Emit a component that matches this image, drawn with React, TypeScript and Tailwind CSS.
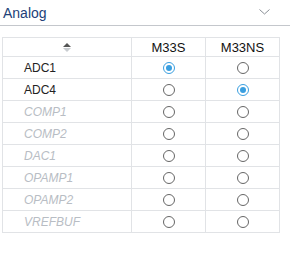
import React from "react";

const rows = [
  { name: "ADC1", enabled: true, sel: 0 },
  { name: "ADC4", enabled: true, sel: 1 },
  { name: "COMP1", enabled: false, sel: -1 },
  { name: "COMP2", enabled: false, sel: -1 },
  { name: "DAC1", enabled: false, sel: -1 },
  { name: "OPAMP1", enabled: false, sel: -1 },
  { name: "OPAMP2", enabled: false, sel: -1 },
  { name: "VREFBUF", enabled: false, sel: -1 },
];

function Radio({ on }: { on: boolean }) {
  if (on) {
    return (
      <span className="flex h-[12px] w-[12px] items-center justify-center rounded-full border border-[#3a9fe0] bg-white">
        <span className="h-[6px] w-[6px] rounded-full bg-[#3a9fe0]" />
      </span>
    );
  }
  return <span className="block h-[12px] w-[12px] rounded-full border border-[#666] bg-white" />;
}

export default function App() {
  return (
    <div className="h-[266px] w-[294px] bg-white font-[Liberation_Sans,Arial,sans-serif]">
      <div className="flex h-[26px] w-[290px] items-center justify-between border-b border-[#c4c7cc] pl-[3px] pr-[20px]">
        <span className="text-[14px] leading-none text-[#223f78]">Analog</span>
        <svg width="11" height="6" viewBox="0 0 11 6" className="mb-[2px]">
          <path d="M0.5 0.5 L5.5 5 L10.5 0.5" fill="none" stroke="#8a8f96" strokeWidth="1" />
        </svg>
      </div>
      <table className="ml-[2px] mt-[11px] w-[277px] table-fixed border-collapse text-[12px]">
        <colgroup>
          <col className="w-[129px]" />
          <col className="w-[74px]" />
          <col className="w-[74px]" />
        </colgroup>
        <thead>
          <tr className="h-[19px]">
            <th className="border border-[#e1e3e6] p-0">
              <div className="flex flex-col items-center gap-[1px]">
                <span className="h-0 w-0 border-x-[4px] border-b-[4px] border-x-transparent border-b-[#555]" />
                <span className="h-0 w-0 border-x-[4px] border-t-[4px] border-x-transparent border-t-[#c8ccd0]" />
              </div>
            </th>
            <th className="border border-[#e1e3e6] p-0 text-center text-[13px] font-normal leading-none text-[#111]">M33S</th>
            <th className="border border-[#e1e3e6] p-0 text-center text-[13px] font-normal leading-none text-[#111]">M33NS</th>
          </tr>
        </thead>
        <tbody>
          {rows.map((r) => (
            <tr key={r.name} className="h-[22px]">
              <td
                className={
                  r.enabled
                    ? "border border-[#e1e3e6] py-0 pl-[21px] leading-none text-[#222]"
                    : "border border-[#e1e3e6] py-0 pl-[21px] leading-none italic text-[#b8bdc4]"
                }
              >
                {r.name}
              </td>
              <td className="border border-[#e1e3e6] p-0">
                <div className="flex justify-center">
                  <Radio on={r.sel === 0} />
                </div>
              </td>
              <td className="border border-[#e1e3e6] p-0">
                <div className="flex justify-center">
                  <Radio on={r.sel === 1} />
                </div>
              </td>
            </tr>
          ))}
        </tbody>
      </table>
    </div>
  );
}
